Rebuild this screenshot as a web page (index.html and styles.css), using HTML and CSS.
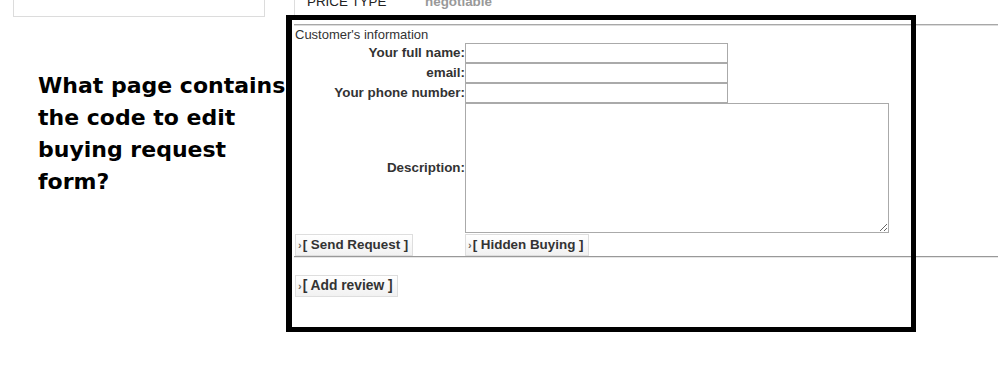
FILE: index.html
```html
<!DOCTYPE html>
<html>
<head>
<meta charset="utf-8">
<link rel="stylesheet" href="styles.css">
</head>
<body>
<div class="page">
  <aside class="left">
    <div class="leftbox"></div>
    <h2 class="question">What page contains the code to edit buying request form?</h2>
  </aside>
  <main class="right">
    <div class="price-row">
      <span class="price-label">PRICE TYPE</span>
      <span class="price-value">negotiable</span>
    </div>
    <div class="rule"></div>
    <form class="buy-form">
      <div class="caption">Customer's information</div>
      <div class="grid">
        <label class="lbl">Your full name:</label>
        <input class="field" type="text">
        <label class="lbl">email:</label>
        <input class="field" type="text">
        <label class="lbl">Your phone number:</label>
        <input class="field" type="text">
        <label class="lbl">Description:</label>
        <textarea class="area"></textarea>
        <div class="btn-cell"><span class="btn"><span class="chev">›</span>[ Send Request ]</span></div>
        <div class="btn-cell"><span class="btn"><span class="chev">›</span>[ Hidden Buying ]</span></div>
      </div>
    </form>
    <div class="rule rule-bottom"></div>
    <div class="review"><span class="btn"><span class="chev">›</span>[ Add review ]</span></div>
  </main>
  <div class="annot"></div>
</div>
</body>
</html>
```
FILE: styles.css
```css
html, body {
  margin: 0;
  padding: 0;
  background: #fff;
}
body {
  font-family: "Liberation Sans", Arial, sans-serif;
  color: #333;
  overflow: hidden;
}
.page {
  position: relative;
  display: flex;
  width: 998px;
  height: 371px;
}
.left {
  width: 294px;
  flex: none;
}
.leftbox {
  margin-left: 13px;
  width: 252px;
  height: 17px;
  box-sizing: border-box;
  border: 1px solid #dcdcdc;
  border-top: none;
}
.question {
  margin: 53px 0 0 38px;
  width: 248px;
  font-family: "DejaVu Sans", Verdana, sans-serif;
  font-weight: bold;
  font-size: 22px;
  line-height: 32px;
  color: #000;
}
.right {
  flex: 1;
}
.price-row {
  margin-top: -6px;
  height: 21px;
  border-left: 1px solid #ddd;
  padding-left: 12px;
  display: flex;
  font-size: 13.4px;
  line-height: 16px;
}
.price-label {
  width: 118px;
  color: #222;
}
.price-value {
  color: #999;
  font-weight: bold;
}
.rule {
  margin-top: 9px;
  border-top: 1px solid #a8a8a8;
  border-bottom: 1px solid #dcdcdc;
}
.buy-form {
  margin: 0;
  padding-left: 1px;
}
.caption {
  font-size: 13px;
  line-height: 16px;
  margin-top: 1px;
  color: #333;
}
.grid {
  display: grid;
  grid-template-columns: 170px auto;
  justify-content: start;
}
.lbl {
  align-self: center;
  text-align: right;
  font-weight: bold;
  font-size: 13.4px;
  line-height: 16px;
  color: #333;
}
.field {
  display: block;
  width: 263px;
  height: 20px;
  box-sizing: border-box;
  border: 1px solid #aaa;
  margin: 0;
  padding: 0 2px;
  font: 13px "Liberation Sans", Arial, sans-serif;
}
.area {
  display: block;
  width: 424px;
  height: 130px;
  box-sizing: border-box;
  border: 1px solid #aaa;
  margin: 0;
  padding: 2px;
  font: 13px "Liberation Sans", Arial, sans-serif;
}
.btn-cell {
  margin-top: 1px;
  height: 22px;
}
.btn {
  display: inline-block;
  vertical-align: top;
  height: 22px;
  box-sizing: border-box;
  padding: 0 4px 0 2px;
  border: 1px solid #dedede;
  background: linear-gradient(#ffffff, #f1f1f1);
  font-weight: bold;
  font-size: 13.4px;
  line-height: 20px;
  color: #333;
}
.chev {
  color: #666;
  font-size: 11px;
  margin-right: 1px;
}
.rule-bottom {
  margin-top: 0;
  border-top: 1px solid #999;
  border-bottom: 1px solid #e6e6e6;
}
.review {
  margin-top: 17px;
  padding-left: 1px;
  height: 22px;
}
.review .btn {
  font-size: 13.8px;
  padding: 0 4px 0 2px;
}
.annot {
  position: absolute;
  left: 286px;
  top: 15px;
  width: 630px;
  height: 317px;
  box-sizing: border-box;
  border: 5px solid #000;
  border-left-width: 6px;
  pointer-events: none;
}
```
